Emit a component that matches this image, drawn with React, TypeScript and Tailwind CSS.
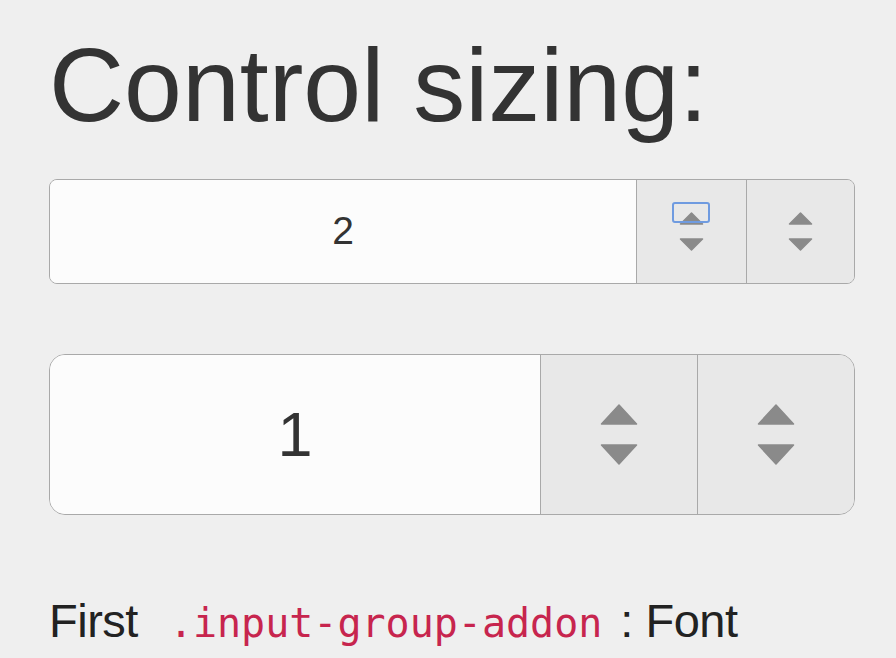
function Arrows({ big, focus }: { big?: boolean; focus?: boolean }) {
  const w = big ? 38 : 25;
  const h = big ? 21 : 13;
  const gap = big ? 19 : 13;
  const up = (
    <svg width={w} height={h} viewBox={`0 0 ${w} ${h}`} className="block">
      <path
        d={`M1.5 ${h - 1} L${w / 2} 1 L${w - 1.5} ${h - 1} Z`}
        fill="#8a8a8a"
        stroke="#8a8a8a"
        strokeWidth="1.5"
        strokeLinejoin="round"
      />
    </svg>
  );
  const down = (
    <svg width={w} height={h} viewBox={`0 0 ${w} ${h}`} className="block">
      <path
        d={`M1.5 1 L${w / 2} ${h - 1} L${w - 1.5} 1 Z`}
        fill="#8a8a8a"
        stroke="#8a8a8a"
        strokeWidth="1.5"
        strokeLinejoin="round"
      />
    </svg>
  );
  return (
    <div className="flex flex-col items-center" style={{ gap }}>
      <div className="relative">
        {focus && (
          <div className="absolute left-[-7px] top-[-10px] h-[21px] w-[38px] rounded-[3px] border-2 border-[#6f9be0]" />
        )}
        {up}
      </div>
      {down}
    </div>
  );
}

export default function App() {
  return (
    <div className="h-[658px] w-[896px] overflow-hidden bg-[#efefef] pl-[49px] pt-[33px] font-['Liberation_Sans',Arial,sans-serif]">
      <h1 className="text-[104px] leading-none text-[#333]">Control sizing:</h1>

      <div className="mt-[42px] flex h-[105px] w-[806px] overflow-hidden rounded-[8px] border border-[#a9a9a9]">
        <div className="flex flex-1 items-center justify-center bg-[#fcfcfc] text-[39px] text-[#333]">2</div>
        <div className="flex w-[110px] items-center justify-center border-l border-[#a9a9a9] bg-[#e8e8e8]">
          <Arrows focus />
        </div>
        <div className="flex w-[108px] items-center justify-center border-l border-[#a9a9a9] bg-[#e8e8e8]">
          <Arrows />
        </div>
      </div>

      <div className="mt-[70px] flex h-[161px] w-[806px] overflow-hidden rounded-[16px] border border-[#a9a9a9]">
        <div className="flex flex-1 items-center justify-center bg-[#fcfcfc] text-[63px] text-[#333]">1</div>
        <div className="flex w-[157px] items-center justify-center border-l border-[#a9a9a9] bg-[#e8e8e8]">
          <Arrows big />
        </div>
        <div className="flex w-[157px] items-center justify-center border-l border-[#a9a9a9] bg-[#e8e8e8]">
          <Arrows big />
        </div>
      </div>

      <p className="mt-[82px] whitespace-nowrap text-[47px] leading-none tracking-[-0.5px] text-[#222]">
        First
        <code className="ml-[31px] mr-[18px] font-['DejaVu_Sans_Mono',monospace] text-[40px] tracking-normal text-[#c7254e]">
          .input-group-addon
        </code>
        : Font
      </p>
    </div>
  );
}
